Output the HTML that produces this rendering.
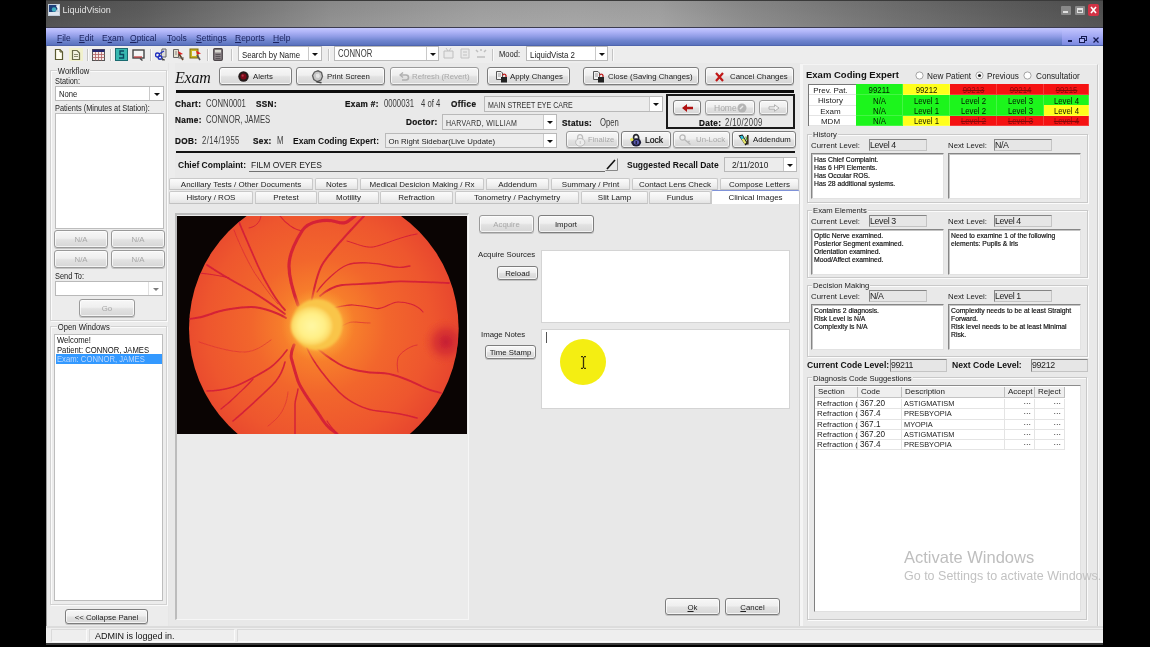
<!DOCTYPE html>
<html>
<head>
<meta charset="utf-8">
<title>LiquidVision</title>
<style>
*{box-sizing:border-box;margin:0;padding:0}
html,body{width:1150px;height:647px;overflow:hidden;background:#000}
body{font-family:"Liberation Sans",sans-serif;font-size:8px;color:#1a1a1a;position:relative}
.a{position:absolute}
#win{position:absolute;left:46px;top:0;width:1057px;height:645px;background:#e9e9e9;overflow:hidden;filter:blur(.45px)}
/* title bar */
#title{position:absolute;left:0;top:0;width:1057px;height:28px;
 background:linear-gradient(180deg,rgba(0,0,0,.05),rgba(255,255,255,.03)),linear-gradient(90deg,#4e4e4e 0,#5c5c5c 9%,#6a6a6a 14%,#909090 27%,#a2a2a2 41%,#a5a5a5 50%,#a2a2a2 58%,#8c8c8c 66%,#707070 80%,#5a5a5a 93%,#505050 100%);
 border-top:1px solid #3a3a3a;border-bottom:1px solid #3c3c50}
#title .t{position:absolute;left:16.5px;top:4px;font-size:9px;color:#e4e4e4;letter-spacing:0}
#menu{position:absolute;left:0;top:28px;width:1057px;height:18px;
 background:linear-gradient(180deg,#c4c8ff 0,#b0b5f8 22%,#909ce6 50%,#6e84ce 75%,#5a72be 100%);border-bottom:1px solid #4e64ac}
#menu span{position:absolute;top:5px;font-size:8.5px;color:#1c2460;white-space:nowrap}
#menu u{text-decoration:underline}
#tb{position:absolute;left:0;top:46px;width:1057px;height:17px;background:#ededed}
.sep{position:absolute;top:49px;width:1px;height:12px;background:#c4c4c4;border-right:1px solid #fafafa;width:2px}
/* generic */
.btn{position:absolute;border:1px solid #7d7d7d;border-radius:3px;
 background:linear-gradient(180deg,#f7f7f7 0,#efefef 45%,#e2e2e2 55%,#d6d6d6 100%);
 box-shadow:inset 0 0 0 1px rgba(255,255,255,.7), 0 1px 0 rgba(120,120,120,.35);
 font-size:7.8px;color:#222;text-align:center;white-space:nowrap;overflow:hidden;padding-top:1px}
.btn.dis{color:#a8a8a8;border-color:#9a9a9a}
.btn span.l{position:absolute;white-space:nowrap}
.combo{position:absolute;background:#fff;border:1px solid #b9b9b9;font-size:8px;white-space:nowrap;overflow:hidden}
.combo.g{background:#ececec}
.combo .ar{position:absolute;right:0;top:0;bottom:0;width:12px;background:#fff;border-left:1px solid #c9c9c9}
.combo .ar:after{content:"";position:absolute;left:50%;top:50%;margin:-1px 0 0 -3px;border:3px solid transparent;border-top:3px solid #111;border-bottom:0}
.combo .v{position:absolute;left:3px;top:50%;transform:translateY(-50%)}
.lb{position:absolute;font-weight:bold;font-size:8.5px;color:#111;white-space:nowrap;line-height:10px}
.tx{position:absolute;font-size:7.8px;color:#222;white-space:nowrap;line-height:10px}
.cond{position:absolute;font-size:10px;color:#3a3a3a;white-space:nowrap;line-height:10px;transform:scaleX(.77);transform-origin:0 50%;margin-top:-.5px}
.cond2{position:absolute;font-size:8.8px;color:#333;white-space:nowrap;line-height:10px;transform:scaleX(.8);transform-origin:0 50%}
.vb{letter-spacing:.35px;font-size:8.2px;-webkit-text-stroke:.2px #111;margin-top:1px}
.grp{position:absolute;border:1px solid #c9c9c9;box-shadow:inset 1px 1px 0 #fbfbfb, 1px 1px 0 #fbfbfb}
.grp>.gl{position:absolute;top:-5px;left:6px;background:#e9e9e9;padding:0 1px;font-size:8px;line-height:10px;color:#222;white-space:nowrap}
.list{position:absolute;background:#fff;border:1px solid #bdbdbd}
.sunk{position:absolute;background:#fff;border:1px solid #e2e2e2;border-top:1px solid #868686;border-left:1px solid #868686;box-shadow:inset 1px 1px 0 #c4c4c4;-webkit-text-stroke:.18px #111;font-size:6.8px;line-height:8.1px;color:#111;padding:2px 0 0 2px;white-space:nowrap;overflow:hidden}
.fld{position:absolute;background:#e6e6e6;border:1px solid #c4c4c4;border-top:1px solid #858585;border-left:1px solid #858585;font-size:8.8px;letter-spacing:-.35px;line-height:10px;color:#222;padding-left:0;white-space:nowrap;overflow:hidden}
.tab{position:absolute;height:12px;border:1px solid #c9c9c9;border-bottom:1px solid #c2c2c2;border-radius:2px 2px 0 0;
 background:linear-gradient(180deg,#fbfbfb 0,#f0f0f0 60%,#e3e3e3 100%);font-size:8px;line-height:11.5px;text-align:center;color:#222;white-space:nowrap;overflow:hidden}
.tab.on{background:#fff;border-top:1px solid #7f92d8;border-bottom:none}
</style>
</head>
<body>
<div id="win">
 <!-- TITLE -->
 <div id="title">
  <svg class="a" style="left:2px;top:3px" width="12" height="12" viewBox="0 0 12 12"><rect width="12" height="12" fill="#c4cfdc"/><path d="M1 1 H8 L10 4 L7 8 H1 Z" fill="#1e3f7a"/><circle cx="6" cy="5.5" r="2.2" fill="#3fb0c0"/><path d="M1 8 H11 V11 H1 Z" fill="#dfe6ee"/><path d="M8 2 L11 1 V7 Z" fill="#eef2f6"/></svg>
  <span class="t">LiquidVision</span>
  <div class="a" style="left:1015px;top:5px;width:10px;height:9px;background:#888;border-radius:1px"><div class="a" style="left:2px;top:5px;width:5px;height:2px;background:#e0e0e0"></div></div>
  <div class="a" style="left:1029px;top:5px;width:10px;height:9px;background:#8a8a8a;border-radius:1px"><div class="a" style="left:2px;top:2px;width:6px;height:5px;border:1px solid #e2e2e2;border-top-width:2px"></div></div>
  <div class="a" style="left:1042px;top:3px;width:11px;height:12px;background:#d23245;border-radius:2px"><svg class="a" style="left:2px;top:2px" width="7" height="8" viewBox="0 0 7 8"><path d="M1 1 L6 7 M6 1 L1 7" stroke="#fff" stroke-width="1.6"/></svg></div>
 </div>
 <!-- MENU -->
 <div id="menu">
  <span style="left:11px"><u>F</u>ile</span>
  <span style="left:33px"><u>E</u>dit</span>
  <span style="left:56px">E<u>x</u>am</span>
  <span style="left:84px"><u>O</u>ptical</span>
  <span style="left:121px"><u>T</u>ools</span>
  <span style="left:150px"><u>S</u>ettings</span>
  <span style="left:189px"><u>R</u>eports</span>
  <span style="left:227px"><u>H</u>elp</span>
  <div class="a" style="left:1016px;top:0;width:41px;height:17px;background:linear-gradient(180deg,#c4c6ff,#9aa2f0 60%,#7a88e0)"></div>
  <div class="a" style="left:1022px;top:12px;width:4px;height:2px;background:#141a50"></div>
  <svg class="a" style="left:1033px;top:8px" width="8" height="7" viewBox="0 0 8 7"><rect x="2.5" y=".5" width="5" height="4" fill="none" stroke="#141a50"/><rect x=".5" y="2.5" width="5" height="4" fill="#aab0f4" stroke="#141a50"/></svg>
  <svg class="a" style="left:1047px;top:9px" width="6" height="6" viewBox="0 0 6 6"><path d="M.5 .5 L5.5 5.5 M5.5 .5 L.5 5.5" stroke="#141a50" stroke-width="1.3"/></svg>
 </div>
 <!-- TOOLBAR -->
 <div id="tb"></div>
 <!-- toolbar icons (coords relative to #win: x-46) -->
 <svg class="a" style="left:8px;top:48px" width="10" height="13" viewBox="0 0 10 13"><path d="M1.5 1.5 H6 L8.5 4 V11.5 H1.5 Z" fill="#fffef0" stroke="#5a5a30" stroke-width="1.2"/><path d="M6 1.5 V4 H8.5" fill="none" stroke="#5a5a30"/></svg>
 <div class="a" style="left:6px;top:48px;width:14px;height:13px;background:#f3f3c8;display:none"></div>
 <div class="a" style="left:23px;top:48px;width:14px;height:13px;background:#f1f1cc"></div>
 <svg class="a" style="left:25px;top:49px" width="10" height="12" viewBox="0 0 10 12"><path d="M1.5 1.5 H6 L8.5 4 V10.5 H1.5 Z" fill="#f4f2e0" stroke="#6a6a48" stroke-width="1.2"/><path d="M3 5.5 H7 M3 7.5 H7" stroke="#8a8a70"/></svg>
 <div class="sep" style="left:41px"></div>
 <svg class="a" style="left:46px;top:49px" width="13" height="12" viewBox="0 0 13 12"><rect x=".5" y=".5" width="12" height="11" fill="#f4e8e8" stroke="#555"/><rect x=".5" y=".5" width="12" height="2.5" fill="#24246e"/><path d="M.5 5.5 H12.5 M.5 8.5 H12.5 M3.5 3 V11.5 M6.5 3 V11.5 M9.5 3 V11.5" stroke="#b06060" stroke-width=".8"/></svg>
 <div class="sep" style="left:64px"></div>
 <svg class="a" style="left:69px;top:48px" width="13" height="13" viewBox="0 0 13 13"><rect x=".5" y=".5" width="12" height="12" fill="#38b8b0" stroke="#1a6a70"/><path d="M9 3 H5 V6.5 H8.5 V10 H4" fill="none" stroke="#0c4a60" stroke-width="1.4"/></svg>
 <svg class="a" style="left:86px;top:49px" width="13" height="12" viewBox="0 0 13 12"><rect x="1" y="1" width="11" height="8" fill="#f4f4f4" stroke="#444" stroke-width="1.4"/><path d="M2 8 H10" stroke="#c03030" stroke-width="1.2"/><path d="M8 9.5 L10.5 11.5" stroke="#444" stroke-width="1.4"/></svg>
 <div class="sep" style="left:104px"></div>
 <svg class="a" style="left:109px;top:48px" width="13" height="13" viewBox="0 0 13 13"><path d="M7 1 H11 V9 H6 Z" fill="#ddd" stroke="#666"/><circle cx="2.5" cy="7" r="2" fill="none" stroke="#2030c0" stroke-width="1.4"/><circle cx="5" cy="9.5" r="1.8" fill="none" stroke="#2030c0" stroke-width="1.4"/><path d="M4 6 L9 3" stroke="#2030c0" stroke-width="1.3"/><path d="M7 10 V12 H10" stroke="#666"/></svg>
 <svg class="a" style="left:126px;top:48px" width="13" height="13" viewBox="0 0 13 13"><path d="M1.5 1.5 H6.5 V9.5 H1.5 Z" fill="#e4e0d0" stroke="#666"/><path d="M3 4 H5 M3 6 H5" stroke="#888"/><path d="M6 3 L11 6 L7 7 Z" fill="#e02020"/><path d="M7 6 L11 12" stroke="#604020" stroke-width="1.6"/><path d="M6.5 10 H12" stroke="#666"/></svg>
 <svg class="a" style="left:143px;top:48px" width="13" height="13" viewBox="0 0 13 13"><rect x="1" y="1" width="8" height="9" fill="#c8b820" stroke="#7a6a10"/><rect x="3" y="3" width="4.5" height="5" fill="#f0f0e0"/><path d="M7 2.5 L12 5.5 L8 6.5 Z" fill="#e02020"/><path d="M8 7 L11 12" stroke="#555" stroke-width="1.6"/></svg>
 <div class="sep" style="left:161px"></div>
 <svg class="a" style="left:167px;top:48px" width="10" height="13" viewBox="0 0 10 13"><rect x=".7" y=".7" width="8.6" height="11.6" rx="1" fill="#8c8488" stroke="#4a4448" stroke-width="1.2"/><rect x="2" y="2" width="6" height="2.5" fill="#d8d8d0"/><path d="M2.5 6.5 H7.5 M2.5 8.5 H7.5 M2.5 10.5 H7.5" stroke="#5a5458" stroke-width="1"/></svg>
 <div class="sep" style="left:185px"></div>
 <div class="combo" style="left:192px;top:46px;width:84px;height:15px"><span class="v" style="font-size:9.5px;transform:translateY(-50%) scaleX(.82);transform-origin:0 50%">Search by Name</span><div class="ar" style="width:13px"></div></div>
 <div class="sep" style="left:282px"></div>
 <div class="combo" style="left:288px;top:46px;width:105px;height:15px"><span class="cond" style="left:3px;top:2px">CONNOR</span><div class="ar" style="width:12px"></div></div>
 <svg class="a" style="left:396px;top:47px" width="46" height="13" viewBox="0 0 46 13" opacity=".55"><path d="M2 4 H11 V11 H2 Z M4 1 L6 4 M9 1 L7 4" fill="#e8e8e8" stroke="#9a9a9a"/><path d="M19 2 H27 V11 H19 Z M21 5 H25 M21 8 H25" fill="#e8e8e8" stroke="#a0a0a0"/><path d="M34 3 L36 5 M44 3 L42 5 M35 10 H43 M39 2 V4" stroke="#9a9a9a" stroke-width="1.5"/></svg>
 <div class="sep" style="left:446px"></div>
 <span class="tx" style="left:453px;top:49px;font-size:9.5px;transform:scaleX(.8);transform-origin:0 50%">Mood:</span>
 <div class="combo" style="left:480px;top:46px;width:82px;height:15px"><span class="v" style="font-size:9.5px;transform:translateY(-50%) scaleX(.83);transform-origin:0 50%">LiquidVista 2</span><div class="ar" style="width:12px"></div></div>
 <div class="sep" style="left:566px"></div>
 <!--TOOLBAR-ITEMS-->
 <!-- LEFT PANEL (x offsets = abs-46) -->
 <div class="a" style="left:0;top:63px;width:122px;height:565px;background:#ececec"></div>
 <div class="a" style="left:122px;top:63px;width:1px;height:565px;background:#e6e6e6"></div>
 <div class="a" style="left:123px;top:63px;width:6px;height:565px;background:#ececec"></div>
 <div class="grp" style="left:4px;top:70px;width:117px;height:251px;border-color:#d2d2d2"><span class="gl" style="background:#ececec;font-size:9px;transform:scaleX(.85);transform-origin:0 50%">Workflow</span></div>
 <span class="tx" style="left:9px;top:76px;font-size:9px;transform:scaleX(.82);transform-origin:0 50%">Station:</span>
 <div class="combo" style="left:9px;top:86px;width:109px;height:15px"><span class="v" style="font-size:9px;transform:translateY(-50%) scaleX(.85);transform-origin:0 50%">None</span><div class="ar" style="width:14px"></div></div>
 <span class="tx" style="left:9px;top:103px;font-size:9px;transform:scaleX(.82);transform-origin:0 50%">Patients (Minutes at Station):</span>
 <div class="list" style="left:9px;top:113px;width:109px;height:116px"></div>
 <div class="btn dis" style="left:8px;top:230px;width:54px;height:18px;line-height:16px">N/A</div>
 <div class="btn dis" style="left:65px;top:230px;width:54px;height:18px;line-height:16px">N/A</div>
 <div class="btn dis" style="left:8px;top:250px;width:54px;height:18px;line-height:16px">N/A</div>
 <div class="btn dis" style="left:65px;top:250px;width:54px;height:18px;line-height:16px">N/A</div>
 <span class="tx" style="left:9px;top:271px;font-size:9px;transform:scaleX(.82);transform-origin:0 50%">Send To:</span>
 <div class="combo" style="left:9px;top:281px;width:108px;height:15px"><div class="ar" style="width:14px;opacity:.55"></div></div>
 <div class="btn dis" style="left:33px;top:299px;width:56px;height:18px;line-height:16px">Go</div>
 <div class="grp" style="left:4px;top:326px;width:117px;height:279px;border-color:#d2d2d2"><span class="gl" style="background:#ececec;font-size:9px;transform:scaleX(.85);transform-origin:0 50%">Open Windows</span></div>
 <div class="list" style="left:8px;top:334px;width:109px;height:267px">
  <div class="a" style="left:2px;top:1px;font-size:9.2px;line-height:9.5px;color:#111;white-space:nowrap;transform:scaleX(.835);transform-origin:0 50%">Welcome!<br>Patient: CONNOR, JAMES</div>
  <div class="a" style="left:1px;top:19px;width:106px;height:10px;background:#3399ff;color:#bcd8ff;font-size:9.2px;line-height:10px;padding-left:1px;white-space:nowrap"><span style="display:inline-block;transform:scaleX(.835);transform-origin:0 50%">Exam: CONNOR, JAMES</span></div>
 </div>
 <div class="btn" style="left:19px;top:609px;width:83px;height:15px;line-height:13px">&lt;&lt; Collapse Panel</div>
 <!--LEFT-PANEL-->
 <!-- MAIN PANEL (x offsets = abs-46) -->
 <div class="a" style="left:129px;top:63px;width:627px;height:563px;background:#e9e9e9"></div>
 
 <span class="a" style="left:129px;top:68px;font-family:'Liberation Serif',serif;font-style:italic;font-size:16px;line-height:20px;color:#111;letter-spacing:-.2px">Exam</span>
 <!-- top buttons -->
 <div class="btn" style="left:173px;top:67px;width:73px;height:18px"><svg class="a" style="left:18px;top:3px" width="11" height="11" viewBox="0 0 11 11"><circle cx="5.5" cy="5.5" r="5.2" fill="#241a1a"/><circle cx="5.5" cy="5.5" r="3" fill="#7c0818"/><circle cx="4.7" cy="4.7" r="1.1" fill="#b03a48"/></svg><span class="l" style="left:33px;top:4px">Alerts</span></div>
 <div class="btn" style="left:250px;top:67px;width:89px;height:18px"><svg class="a" style="left:14px;top:2px" width="13" height="14" viewBox="0 0 13 14"><path d="M3.5 2 L7 .8 L10.5 2.5 L11.5 6.5 L10 10 L6 11.5 L2.8 9.5 L1.5 5.5 Z" fill="#c6c6c6" stroke="#5e5e5e" stroke-width="1.3"/><path d="M4.8 4.2 L7.8 3.6 L9 6 L7.8 8 L5.2 7.6 Z" fill="#e4e4e4"/><path d="M5.5 11.8 L10.5 12.8" stroke="#444" stroke-width="1.6"/></svg><span class="l" style="left:30px;top:4px">Print Screen</span></div>
 <div class="btn dis" style="left:344px;top:67px;width:89px;height:18px"><svg class="a" style="left:8px;top:4px" width="11" height="10" viewBox="0 0 11 10"><path d="M2 3 H7 A2.5 2.5 0 0 1 7 8 H3" fill="none" stroke="#b0b0b0" stroke-width="1.6"/><path d="M4 .5 L1 3 L4 5.5" fill="none" stroke="#b0b0b0" stroke-width="1.4"/></svg><span class="l" style="left:21px;top:4px">Refresh (Revert)</span></div>
 <div class="btn" style="left:441px;top:67px;width:83px;height:18px"><svg class="a" style="left:7px;top:2px" width="13" height="13" viewBox="0 0 13 13"><path d="M1.5 1.5 H6 L7.5 3 V9.5 H1.5 Z" fill="#f0f0f0" stroke="#555"/><path d="M3 4 H6 M3 6 H6" stroke="#888" stroke-width=".8"/><rect x="6" y="7" width="6" height="5.5" fill="#222"/><path d="M7.5 5.5 A1.8 1.8 0 0 1 11 5.5 V7" fill="none" stroke="#c02020" stroke-width="1.3"/></svg><span class="l" style="left:22px;top:4px">Apply Changes</span></div>
 <div class="btn" style="left:537px;top:67px;width:116px;height:18px"><svg class="a" style="left:8px;top:2px" width="13" height="13" viewBox="0 0 13 13"><path d="M1.5 1.5 H6 L7.5 3 V9.5 H1.5 Z" fill="#f0f0f0" stroke="#555"/><path d="M3 4 H6 M3 6 H6" stroke="#888" stroke-width=".8"/><rect x="6" y="7" width="6" height="5.5" fill="#222"/><path d="M7.5 5.5 A1.8 1.8 0 0 1 11 5.5 V7" fill="none" stroke="#c02020" stroke-width="1.3"/></svg><span class="l" style="left:24px;top:4px">Close (Saving Changes)</span></div>
 <div class="btn" style="left:659px;top:67px;width:89px;height:18px"><svg class="a" style="left:9px;top:4px" width="9" height="10" viewBox="0 0 9 10"><path d="M1 1 L8 9 M8 1 L1 9" stroke="#c01818" stroke-width="2.2"/></svg><span class="l" style="left:24px;top:4px">Cancel Changes</span></div>
 <!-- thick rule -->
 <div class="a" style="left:130px;top:90px;width:618px;height:3px;background:#0c0c0c"></div>
 <!-- patient info row 1 -->
 <span class="lb vb" style="left:129px;top:99px">Chart:</span><span class="cond" style="left:160px;top:99px">CONN0001</span>
 <span class="lb vb" style="left:210px;top:99px">SSN:</span>
 <span class="lb vb" style="left:299px;top:99px">Exam #:</span><span class="cond" style="left:338px;top:99px">0000031</span><span class="cond" style="left:375px;top:99px">4 of 4</span>
 <span class="lb vb" style="left:405px;top:99px">Office</span>
 <div class="combo g" style="left:438px;top:96px;width:179px;height:16px"><span class="cond2" style="left:3px;top:3px">MAIN STREET EYE CARE</span><div class="ar" style="width:13px"></div></div>
 <!-- row 2 -->
 <span class="lb vb" style="left:129px;top:115px">Name:</span><span class="cond" style="left:160px;top:115px">CONNOR, JAMES</span>
 <span class="lb vb" style="left:360px;top:117px">Doctor:</span>
 <div class="combo g" style="left:396px;top:114px;width:115px;height:16px"><span class="cond2" style="left:3px;top:3px;letter-spacing:.35px">HARVARD, WILLIAM</span><div class="ar" style="width:13px"></div></div>
 <span class="lb vb" style="left:516px;top:118px">Status:</span><span class="cond" style="left:554px;top:118px">Open</span>
 <!-- row 3 -->
 <span class="lb vb" style="left:129px;top:136px">DOB:</span><span class="cond" style="left:156px;top:136px;letter-spacing:.5px">2/14/1955</span>
 <span class="lb vb" style="left:207px;top:136px">Sex:</span><span class="cond" style="left:231px;top:136px">M</span>
 <span class="lb" style="left:247px;top:136px">Exam Coding Expert:</span>
 <div class="combo g" style="left:339px;top:133px;width:172px;height:15px"><span class="v" style="font-size:7.8px;left:2.5px">On Right Sidebar(Live Update)</span><div class="ar" style="width:13px"></div></div>
 <!-- nav box -->
 <div class="a" style="left:620px;top:94px;width:129px;height:35px;border:2px solid #1a1a1a"></div>
 <div class="btn" style="left:627px;top:100px;width:28px;height:15px"><svg class="a" style="left:8px;top:3px" width="11" height="8" viewBox="0 0 11 8"><path d="M0 4 L5 0 V2.7 H11 V5.3 H5 V8 Z" fill="#b01010"/></svg></div>
 <div class="btn dis" style="left:659px;top:100px;width:50px;height:15px"><span class="l" style="left:8px;top:2px;font-size:8.5px">Home</span><svg class="a" style="left:31px;top:2px" width="10" height="10" viewBox="0 0 10 10"><circle cx="5" cy="5" r="4.5" fill="#b4b4b4"/><path d="M3 6 L6 3" stroke="#e8e8e8" stroke-width="1.5"/></svg></div>
 <div class="btn dis" style="left:713px;top:100px;width:29px;height:15px"><svg class="a" style="left:8px;top:3px" width="12" height="8" viewBox="0 0 12 8"><path d="M11 4 L6.5 .7 V2.8 H1 V5.2 H6.5 V7.3 Z" fill="#f2f2f2" stroke="#aaa" stroke-width=".9"/></svg></div>
 <span class="lb vb" style="left:653px;top:118px">Date:</span><span class="cond" style="left:679px;top:118px;letter-spacing:.5px">2/10/2009</span>
 <!-- finalize row -->
 <div class="btn dis" style="left:520px;top:131px;width:53px;height:17px"><svg class="a" style="left:7px;top:1px" width="12" height="14" viewBox="0 0 12 14"><path d="M3.6 7 V4.6 A2.5 2.9 0 0 1 8.6 4.6 V7" stroke="#bdbdbd" stroke-width="1.3" fill="none"/><ellipse cx="6.2" cy="9.3" rx="4.6" ry="3.9" fill="#ececec" stroke="#bdbdbd"/><path d="M6.2 8 V11" stroke="#c4c4c4" stroke-width="1"/></svg><span class="l" style="left:21px;top:3px;font-size:7.6px">Finalize</span></div>
 <div class="btn" style="left:575px;top:131px;width:50px;height:17px"><svg class="a" style="left:8px;top:1px" width="12" height="14" viewBox="0 0 12 14"><path d="M3.6 7 V4.6 A2.5 2.9 0 0 1 8.6 4.6 V7" stroke="#26262e" stroke-width="1.7" fill="none"/><ellipse cx="6.2" cy="9.3" rx="4.9" ry="4.1" fill="#1c1c36"/><ellipse cx="6.4" cy="9.3" rx="2.7" ry="2.3" fill="#5a5ab0"/><path d="M6.2 8 V11" stroke="#101020" stroke-width="1.1"/><circle cx="1.8" cy="6.6" r="1.7" fill="#e6e65a"/></svg><span class="l" style="left:23px;top:3px;font-size:8.6px;color:#111;-webkit-text-stroke:.2px #111">Lock</span></div>
 <div class="btn dis" style="left:627px;top:131px;width:57px;height:17px"><svg class="a" style="left:5px;top:2px" width="13" height="12" viewBox="0 0 13 12"><circle cx="3.5" cy="3.5" r="2.6" fill="none" stroke="#b8b8b8" stroke-width="1.3"/><path d="M5.5 5.5 L11.5 10.5 M9 8.5 L10.5 7" stroke="#b8b8b8" stroke-width="1.4"/></svg><span class="l" style="left:22px;top:3px;font-size:7.8px">Un-Lock</span></div>
 <div class="btn" style="left:686px;top:131px;width:64px;height:17px"><svg class="a" style="left:5px;top:2px" width="12" height="12" viewBox="0 0 12 12"><path d="M.5 1.5 L4.5 .5 L10 9.5 L7.5 11.5 Z" fill="#1a1a16"/><path d="M2 2.2 L4.3 1.6 L6 4.4 L3.6 5.2 Z" fill="#2cc0dc"/><path d="M3.6 5.2 L6 4.4 L8.4 8.8 L6.6 10 Z" fill="#e8e86a"/><path d="M9.8 1 V10.5" stroke="#3a2c1c" stroke-width="1.6"/><path d="M7.8 2.5 L9 6" stroke="#58a030" stroke-width="1.2"/></svg><span class="l" style="left:20px;top:3px;font-size:7.8px;color:#111">Addendum</span></div>
 <!-- thin rule -->
 <div class="a" style="left:130px;top:150.6px;width:619px;height:2px;background:#141414"></div>
 <!-- chief complaint -->
 <span class="lb" style="left:132px;top:160px">Chief Complaint:</span>
 <span class="tx" style="left:205px;top:159.6px;font-size:8.5px;color:#1a1a1a">FILM OVER EYES</span>
 <div class="a" style="left:203px;top:170.5px;width:356px;height:1px;background:#707070"></div>
 <svg class="a" style="left:559px;top:158px" width="13" height="13" viewBox="0 0 13 13"><path d="M12.5 .5 V12.5 H.5" fill="none" stroke="#888"/><path d="M2 11 L10 2" stroke="#111" stroke-width="1.6"/></svg>
 <span class="lb" style="left:581px;top:159.6px">Suggested Recall Date</span>
 <div class="combo g" style="left:678px;top:157px;width:73px;height:15px"><span class="v" style="left:7px;font-size:8.3px">2/11/2010</span><div class="ar" style="width:13px"></div></div>
 <!-- TABS row 1 (y 178-190) -->
 <div class="tab" style="left:123px;top:178px;width:144px">Ancillary Tests / Other Documents</div>
 <div class="tab" style="left:269px;top:178px;width:43px">Notes</div>
 <div class="tab" style="left:314px;top:178px;width:124px">Medical Desicion Making / Rx</div>
 <div class="tab" style="left:440px;top:178px;width:63px">Addendum</div>
 <div class="tab" style="left:505px;top:178px;width:79px">Summary / Print</div>
 <div class="tab" style="left:586px;top:178px;width:86px">Contact Lens Check</div>
 <div class="tab" style="left:674px;top:178px;width:79px">Compose Letters</div>
 <!-- TABS row 2 (y 191-203) -->
 <div class="tab" style="left:123px;top:191px;width:84px;height:13px">History / ROS</div>
 <div class="tab" style="left:209px;top:191px;width:62px;height:13px">Pretest</div>
 <div class="tab" style="left:272px;top:191px;width:61px;height:13px">Motility</div>
 <div class="tab" style="left:334px;top:191px;width:73px;height:13px">Refraction</div>
 <div class="tab" style="left:409px;top:191px;width:124px;height:13px">Tonometry / Pachymetry</div>
 <div class="tab" style="left:535px;top:191px;width:67px;height:13px">Slit Lamp</div>
 <div class="tab" style="left:603px;top:191px;width:62px;height:13px">Fundus</div>
 <div class="tab on" style="left:665px;top:190px;width:89px;height:14px;line-height:13px">Clinical Images</div>
 <!-- tab content -->
 <div class="a" style="left:123px;top:204px;width:631px;height:422px;background:#e8e8e8;border-right:1px solid #d0d0d0"></div>
 <div class="a" style="left:754px;top:204px;width:2px;height:422px;background:#f7f7f7"></div>
 <!-- image frame -->
 <div class="a" style="left:129px;top:213px;width:294px;height:407px;border:1px solid #f6f6f6;border-top:2px solid #bcbcbc;border-left:2px solid #bcbcbc;background:#ebebeb"></div>
 <svg class="a" style="left:131px;top:216px" width="290" height="218" viewBox="0 0 290 218">
  <defs>
   <radialGradient id="fg" cx="142" cy="110" r="150" gradientUnits="userSpaceOnUse">
    <stop offset="0" stop-color="#fa962c"/><stop offset=".22" stop-color="#f7802b"/><stop offset=".45" stop-color="#f2662c"/><stop offset=".75" stop-color="#ee562e"/><stop offset=".92" stop-color="#e8482e"/><stop offset="1" stop-color="#e0402c"/>
   </radialGradient>
   <radialGradient id="od" cx=".5" cy=".5" r=".5">
    <stop offset="0" stop-color="#fbb040" stop-opacity=".9"/><stop offset=".66" stop-color="#fba83a" stop-opacity=".75"/><stop offset="1" stop-color="#f8902e" stop-opacity="0"/>
   </radialGradient>
   <radialGradient id="oc" cx=".5" cy=".5" r=".5">
    <stop offset="0" stop-color="#fff7a4"/><stop offset=".6" stop-color="#fff088"/><stop offset=".85" stop-color="#fde070"/><stop offset="1" stop-color="#fbcf58"/>
   </radialGradient>
   <filter id="bl2" x="-10%" y="-10%" width="120%" height="120%"><feGaussianBlur stdDeviation=".9"/></filter>
   <radialGradient id="mc" cx=".5" cy=".5" r=".5">
    <stop offset="0" stop-color="#c41a34" stop-opacity=".95"/><stop offset=".45" stop-color="#d22a32" stop-opacity=".7"/><stop offset="1" stop-color="#e8482e" stop-opacity="0"/>
   </radialGradient>
   <clipPath id="cc"><ellipse cx="146.8" cy="112.4" rx="134.8" ry="137.1"/></clipPath>
   <filter id="bl" x="-5%" y="-5%" width="110%" height="110%"><feGaussianBlur stdDeviation=".45"/></filter>
  </defs>
  <rect width="290" height="218" fill="#0a0403"/>
  <ellipse cx="146.8" cy="112.4" rx="134.8" ry="137.1" fill="url(#fg)"/>
  <g clip-path="url(#cc)" fill="none" stroke="#d21c38" stroke-opacity=".92" stroke-linecap="round" stroke-linejoin="round" filter="url(#bl)">
   <circle cx="269" cy="126" r="24" fill="url(#mc)" stroke="none"/>
   <!-- A main superior -->
   <path d="M121 89 C117 78 112 62 112 50 S118 26 125 15 S150 3 160 6 S172 4 178 0" stroke-width="3.2"/>
   <!-- G branch of A -->
   <path d="M125 15 C118 14 109 8 103 0" stroke-width="1.1"/>
   <path d="M84 0 C83 7 78 11 72 12" stroke-width=".9"/>
   <!-- B, C -->
   <path d="M108 94 C100 86 88 66 81 50 S66 16 62 6" stroke-width="1.8"/>
   <path d="M101 88 C92 78 84 66 79 59 S62 28 57 14" stroke-width="1" stroke-opacity=".55"/>
   <!-- D, E -->
   <path d="M108 98 C100 92 80 78 67 71 S42 57 30 49" stroke-width="1.8"/>
   <path d="M52 62 C45 60 32 58 22 57" stroke-width="1.1"/>
   <!-- F -->
   <path d="M109 102 C103 98 86 91 74 91 S44 94 34 98 S20 102 12 103" stroke-width="1.9"/>
   <!-- I sup right -->
   <path d="M134 88 C137 72 140 58 145 49 S170 18 187 0" stroke-width="2"/>
   <!-- K -->
   <path d="M170 25 C180 28 188 32 196 31 S225 20 240 18" stroke-width="1"/>
   <!-- L -->
   <path d="M140 76 C145 68 160 53 170 49 S200 47 212 50 S226 51 233 50" stroke-width="1.3"/>
   <!-- M -->
   <path d="M143 80 C150 74 158 70 165 69 S200 68 212 66 S255 67 272 67" stroke-width="1.8"/>
   <!-- N -->
   <path d="M139 89 C146 91 152 92 156 91.8 S170 88.5 176 89 S192 91 199 92.5 S214 86 221 86 S240 88 246 96" stroke-width="1.2"/>
   <path d="M165 110 C169 108 172 106 176 106 S188 107 193 107" stroke-width=".9" stroke-opacity=".6"/>
   <!-- O, P -->
   <path d="M110 134 C104 142 98 148 94 151 S66 168 56 171 S40 175 30 175" stroke-width="1.6"/>
   <path d="M76 163 C70 170 64 175 59 180 S48 190 44 193" stroke-width="1.3"/>
   <!-- Q -->
   <path d="M108 146 C106 154 103 160 99 165 S66 197 56 205" stroke-width="1.6"/>
   <!-- R main inferior -->
   <path d="M117 129 C115 134 113 138 114.5 143 S118 156 121 165 S138 192 145 203 S156 214 160 218" stroke-width="3"/>
   <!-- S -->
   <path d="M121 173 C120 180 118 184 118 188 S118 210 118 218" stroke-width="1.5"/>
   <!-- T, U faint -->
   <path d="M22 126 C40 132 55 136 67 136 S88 128 94 124" stroke-width=".9" stroke-opacity=".5"/>
   <path d="M111 176 C110 186 107 192 104 197 S96 206 91 210" stroke-width=".9" stroke-opacity=".5"/>
   <!-- V -->
   <path d="M138 130 C142 134 152 142 162 148 S190 157 204 157 S236 166 246 171 S258 175 264 177" stroke-width="1.8"/>
   <!-- W -->
   <path d="M130 132 C136 146 150 164 162 176 S190 194 201 195 S230 199 240 202" stroke-width="1.6"/>
   <!-- X -->
   <path d="M221 156 C220 150 220 146 221 142 S232 130 240 129" stroke-width=".9" stroke-opacity=".7"/>
   <path d="M150 205 C153 210 157 214 160 218" stroke-width="1.2"/>
  </g>
  <circle cx="141" cy="109" r="37" fill="url(#od)"/>
  <g filter="url(#bl2)"><circle cx="140" cy="108.5" r="25.5" fill="#f9c548"/>
  <ellipse cx="134.7" cy="110" rx="21" ry="19.5" fill="url(#oc)"/></g>
 </svg>
 <!-- acquire/import -->
 <div class="btn dis" style="left:433px;top:215px;width:55px;height:18px;line-height:16px">Acquire</div>
 <div class="btn" style="left:492px;top:215px;width:56px;height:18px;line-height:16px">Import</div>
 <span class="tx" style="left:432px;top:250px">Acquire Sources</span>
 <div class="list" style="left:495px;top:250px;width:249px;height:73px;border-color:#d4d4d4"></div>
 <div class="btn" style="left:451px;top:266px;width:41px;height:14px;line-height:12px">Reload</div>
 <span class="tx" style="left:435px;top:330px">Image Notes</span>
 <div class="list" style="left:495px;top:329px;width:249px;height:80px;border-color:#d4d4d4"></div>
 <div class="btn" style="left:439px;top:345px;width:51px;height:14px;line-height:12px">Time Stamp</div>
 <div class="a" style="left:500px;top:332px;width:1px;height:11px;background:#555"></div>
 <div class="a" style="left:514px;top:339px;width:46px;height:46px;border-radius:50%;background:#f4ee12"></div>
 <svg class="a" style="left:534px;top:356px" width="7" height="13" viewBox="0 0 7 13"><path d="M1 .7 H3 M4 .7 H6 M3.5 1 V12 M1 12.3 H3 M4 12.3 H6" stroke="#3a3208" stroke-width="1.3" fill="none"/></svg>
 <!-- ok/cancel -->
 <div class="btn" style="left:619px;top:598px;width:55px;height:17px;line-height:15px"><u>O</u>k</div>
 <div class="btn" style="left:679px;top:598px;width:55px;height:17px;line-height:15px"><u>C</u>ancel</div>
 <!--MAIN-PANEL-->
 <!-- RIGHT PANEL (x offsets = abs-46) -->
 <div class="a" style="left:754px;top:64px;width:3px;height:563px;background:#f5f5f5"></div><div class="a" style="left:757px;top:63px;width:300px;height:565px;background:#ececec"></div>
 <div class="a" style="left:757px;top:64px;width:295px;height:564px;background:#e9e9e9;border-top:1px solid #f4f4f4;border-right:1px solid #c8c8c8;border-bottom:1px solid #c8c8c8;box-shadow:1px 1px 0 #f8f8f8"></div>
 <span class="a" style="left:760px;top:69px;font-weight:bold;font-size:9.5px;line-height:12px;color:#111;white-space:nowrap">Exam Coding Expert</span>
 <svg class="a" style="left:869px;top:71px" width="9" height="9" viewBox="0 0 9 9"><circle cx="4.5" cy="4.5" r="3.6" fill="#fff" stroke="#9c9c9c" stroke-width=".9"/></svg>
 <span class="tx" style="left:881px;top:71.5px;font-size:8.2px">New Patient</span>
 <svg class="a" style="left:929px;top:71px" width="9" height="9" viewBox="0 0 9 9"><circle cx="4.5" cy="4.5" r="3.6" fill="#fff" stroke="#9c9c9c" stroke-width=".9"/><circle cx="4.5" cy="4.5" r="1.6" fill="#222"/></svg>
 <span class="tx" style="left:941px;top:71.5px;font-size:8.2px">Previous</span>
 <svg class="a" style="left:977px;top:71px" width="9" height="9" viewBox="0 0 9 9"><circle cx="4.5" cy="4.5" r="3.6" fill="#fff" stroke="#9c9c9c" stroke-width=".9"/></svg>
 <span class="tx" style="left:990px;top:71.5px;font-size:8.2px">Consultatior</span>
 <div class="a" style="left:762px;top:84px;width:281px;height:41.5px;background:#fff;border-top:1px solid #777;border-left:1px solid #777"></div>
 <div class="a" style="left:763px;top:84.5px;width:47px;height:10.5px;font-size:8px;line-height:12.0px;text-align:center;color:#222;border-bottom:1px solid #e4e4e4;padding-right:4px">Prev. Pat.</div>
 <div class="a" style="left:810px;top:84px;width:47.3px;height:11.0px;background:#1cf51c;font-size:9px;line-height:12.3px;text-align:center;color:#021c02;box-shadow:inset -1px -1px 0 rgba(255,255,255,.18)"><span style="display:inline-block;transform:scaleX(.87)">99211</span></div>
 <div class="a" style="left:857px;top:84px;width:47.3px;height:11.0px;background:#ffff1c;font-size:9px;line-height:12.3px;text-align:center;color:#1c1c00;box-shadow:inset -1px -1px 0 rgba(255,255,255,.18)"><span style="display:inline-block;transform:scaleX(.87)">99212</span></div>
 <div class="a" style="left:904px;top:84px;width:47.3px;height:11.0px;background:#f51212;font-size:9px;line-height:12.3px;text-align:center;color:#8a0808;box-shadow:inset -1px -1px 0 rgba(255,255,255,.18)"><span style="display:inline-block;transform:scaleX(.87);text-decoration:line-through">99213</span></div>
 <div class="a" style="left:951px;top:84px;width:47.3px;height:11.0px;background:#f51212;font-size:9px;line-height:12.3px;text-align:center;color:#8a0808;box-shadow:inset -1px -1px 0 rgba(255,255,255,.18)"><span style="display:inline-block;transform:scaleX(.87);text-decoration:line-through">99214</span></div>
 <div class="a" style="left:998px;top:84px;width:45.3px;height:11.0px;background:#f51212;font-size:9px;line-height:12.3px;text-align:center;color:#8a0808;box-shadow:inset -1px -1px 0 rgba(255,255,255,.18)"><span style="display:inline-block;transform:scaleX(.87);text-decoration:line-through">99215</span></div>
 <div class="a" style="left:763px;top:95.0px;width:47px;height:10.5px;font-size:8px;line-height:12.0px;text-align:center;color:#222;border-bottom:1px solid #e4e4e4;padding-right:4px">History</div>
 <div class="a" style="left:810px;top:94.5px;width:47.3px;height:11.0px;background:#1cf51c;font-size:9px;line-height:12.3px;text-align:center;color:#021c02;box-shadow:inset -1px -1px 0 rgba(255,255,255,.18)"><span style="display:inline-block;transform:scaleX(.87)">N/A</span></div>
 <div class="a" style="left:857px;top:94.5px;width:47.3px;height:11.0px;background:#1cf51c;font-size:9px;line-height:12.3px;text-align:center;color:#021c02;box-shadow:inset -1px -1px 0 rgba(255,255,255,.18)"><span style="display:inline-block;transform:scaleX(.87)">Level 1</span></div>
 <div class="a" style="left:904px;top:94.5px;width:47.3px;height:11.0px;background:#1cf51c;font-size:9px;line-height:12.3px;text-align:center;color:#021c02;box-shadow:inset -1px -1px 0 rgba(255,255,255,.18)"><span style="display:inline-block;transform:scaleX(.87)">Level 2</span></div>
 <div class="a" style="left:951px;top:94.5px;width:47.3px;height:11.0px;background:#1cf51c;font-size:9px;line-height:12.3px;text-align:center;color:#021c02;box-shadow:inset -1px -1px 0 rgba(255,255,255,.18)"><span style="display:inline-block;transform:scaleX(.87)">Level 3</span></div>
 <div class="a" style="left:998px;top:94.5px;width:45.3px;height:11.0px;background:#1cf51c;font-size:9px;line-height:12.3px;text-align:center;color:#021c02;box-shadow:inset -1px -1px 0 rgba(255,255,255,.18)"><span style="display:inline-block;transform:scaleX(.87)">Level 4</span></div>
 <div class="a" style="left:763px;top:105.5px;width:47px;height:10.5px;font-size:8px;line-height:12.0px;text-align:center;color:#222;border-bottom:1px solid #e4e4e4;padding-right:4px">Exam</div>
 <div class="a" style="left:810px;top:105px;width:47.3px;height:11.0px;background:#1cf51c;font-size:9px;line-height:12.3px;text-align:center;color:#021c02;box-shadow:inset -1px -1px 0 rgba(255,255,255,.18)"><span style="display:inline-block;transform:scaleX(.87)">N/A</span></div>
 <div class="a" style="left:857px;top:105px;width:47.3px;height:11.0px;background:#1cf51c;font-size:9px;line-height:12.3px;text-align:center;color:#021c02;box-shadow:inset -1px -1px 0 rgba(255,255,255,.18)"><span style="display:inline-block;transform:scaleX(.87)">Level 1</span></div>
 <div class="a" style="left:904px;top:105px;width:47.3px;height:11.0px;background:#1cf51c;font-size:9px;line-height:12.3px;text-align:center;color:#021c02;box-shadow:inset -1px -1px 0 rgba(255,255,255,.18)"><span style="display:inline-block;transform:scaleX(.87)">Level 2</span></div>
 <div class="a" style="left:951px;top:105px;width:47.3px;height:11.0px;background:#1cf51c;font-size:9px;line-height:12.3px;text-align:center;color:#021c02;box-shadow:inset -1px -1px 0 rgba(255,255,255,.18)"><span style="display:inline-block;transform:scaleX(.87)">Level 3</span></div>
 <div class="a" style="left:998px;top:105px;width:45.3px;height:11.0px;background:#ffff1c;font-size:9px;line-height:12.3px;text-align:center;color:#1c1c00;box-shadow:inset -1px -1px 0 rgba(255,255,255,.18)"><span style="display:inline-block;transform:scaleX(.87)">Level 4</span></div>
 <div class="a" style="left:763px;top:116.0px;width:47px;height:10.0px;font-size:8px;line-height:11.5px;text-align:center;color:#222;border-bottom:1px solid #e4e4e4;padding-right:4px">MDM</div>
 <div class="a" style="left:810px;top:115.5px;width:47.3px;height:10.5px;background:#1cf51c;font-size:9px;line-height:11.8px;text-align:center;color:#021c02;box-shadow:inset -1px -1px 0 rgba(255,255,255,.18)"><span style="display:inline-block;transform:scaleX(.87)">N/A</span></div>
 <div class="a" style="left:857px;top:115.5px;width:47.3px;height:10.5px;background:#ffff1c;font-size:9px;line-height:11.8px;text-align:center;color:#1c1c00;box-shadow:inset -1px -1px 0 rgba(255,255,255,.18)"><span style="display:inline-block;transform:scaleX(.87)">Level 1</span></div>
 <div class="a" style="left:904px;top:115.5px;width:47.3px;height:10.5px;background:#f51212;font-size:9px;line-height:11.8px;text-align:center;color:#8a0808;box-shadow:inset -1px -1px 0 rgba(255,255,255,.18)"><span style="display:inline-block;transform:scaleX(.87);text-decoration:line-through">Level 2</span></div>
 <div class="a" style="left:951px;top:115.5px;width:47.3px;height:10.5px;background:#f51212;font-size:9px;line-height:11.8px;text-align:center;color:#8a0808;box-shadow:inset -1px -1px 0 rgba(255,255,255,.18)"><span style="display:inline-block;transform:scaleX(.87);text-decoration:line-through">Level 3</span></div>
 <div class="a" style="left:998px;top:115.5px;width:45.3px;height:10.5px;background:#f51212;font-size:9px;line-height:11.8px;text-align:center;color:#8a0808;box-shadow:inset -1px -1px 0 rgba(255,255,255,.18)"><span style="display:inline-block;transform:scaleX(.87);text-decoration:line-through">Level 4</span></div>
 <div class="grp" style="left:761px;top:134px;width:281px;height:69px"><span class="gl" style="background:#e9e9e9;left:4px;font-size:7.7px">History</span></div>
 <span class="tx" style="left:765px;top:141px">Current Level:</span>
 <div class="fld" style="left:823px;top:139px;width:58px;height:12px">Level 4</div>
 <span class="tx" style="left:902px;top:141px">Next Level:</span>
 <div class="fld" style="left:948px;top:139px;width:58px;height:12px">N/A</div>
 <div class="sunk" style="left:765px;top:153px;width:133px;height:46px">Has Chief Complaint.<br>Has 6 HPI Elements.<br>Has Occular ROS.<br>Has 28 additional systems.</div>
 <div class="sunk" style="left:902px;top:153px;width:133px;height:46px"></div>
 <div class="grp" style="left:761px;top:210px;width:281px;height:68px"><span class="gl" style="background:#e9e9e9;left:4px;font-size:7.7px">Exam Elements</span></div>
 <span class="tx" style="left:765px;top:217px">Current Level:</span>
 <div class="fld" style="left:823px;top:215px;width:58px;height:12px">Level 3</div>
 <span class="tx" style="left:902px;top:217px">Next Level:</span>
 <div class="fld" style="left:948px;top:215px;width:58px;height:12px">Level 4</div>
 <div class="sunk" style="left:765px;top:229px;width:133px;height:46px">Optic Nerve examined.<br>Posterior Segment examined.<br>Orientation examined.<br>Mood/Affect examined.</div>
 <div class="sunk" style="left:902px;top:229px;width:133px;height:46px">Need to examine 1 of the following<br>elements: Pupils &amp; Iris</div>
 <div class="grp" style="left:761px;top:285px;width:281px;height:72px"><span class="gl" style="background:#e9e9e9;left:4px;font-size:7.7px">Decision Making</span></div>
 <span class="tx" style="left:765px;top:292px">Current Level:</span>
 <div class="fld" style="left:823px;top:290px;width:58px;height:12px">N/A</div>
 <span class="tx" style="left:902px;top:292px">Next Level:</span>
 <div class="fld" style="left:948px;top:290px;width:58px;height:12px">Level 1</div>
 <div class="sunk" style="left:765px;top:304px;width:133px;height:46px">Contains 2 diagnosis.<br>Risk Level is N/A<br>Complexity is N/A</div>
 <div class="sunk" style="left:902px;top:304px;width:133px;height:46px">Complexity needs to be at least Straight<br>Forward.<br>Risk level needs to be at least Minimal<br>Risk.</div>
 <span class="a" style="left:761px;top:360px;font-weight:bold;font-size:8.6px;line-height:11px;color:#111;white-space:nowrap">Current Code Level:</span>
 <div class="fld" style="left:844px;top:359px;width:57px;height:13px">99211</div>
 <span class="a" style="left:906px;top:360px;font-weight:bold;font-size:8.6px;line-height:11px;color:#111;white-space:nowrap">Next Code Level:</span>
 <div class="fld" style="left:985px;top:359px;width:57px;height:13px">99212</div>
 <div class="grp" style="left:761px;top:376.5px;width:280px;height:243.5px"><span class="gl" style="top:-3.5px;background:#e9e9e9;left:4px;font-size:7.7px">Diagnosis Code Suggestions</span></div>
 <div class="a" style="left:768px;top:385px;width:267px;height:227px;background:#fff;border:1px solid #e0e0e0;border-top:1px solid #8c8c8c;border-left:1px solid #808080"></div>
 <div class="a" style="left:769px;top:387px;width:43px;height:11px;background:#efefef;border-right:1px solid #bdbdbd;border-bottom:1px solid #c4c4c4;font-size:8px;line-height:10px;padding-left:3px;color:#222;white-space:nowrap;overflow:hidden">Section</div>
 <div class="a" style="left:812px;top:387px;width:44px;height:11px;background:#efefef;border-right:1px solid #bdbdbd;border-bottom:1px solid #c4c4c4;font-size:8px;line-height:10px;padding-left:3px;color:#222;white-space:nowrap;overflow:hidden">Code</div>
 <div class="a" style="left:856px;top:387px;width:103px;height:11px;background:#efefef;border-right:1px solid #bdbdbd;border-bottom:1px solid #c4c4c4;font-size:8px;line-height:10px;padding-left:3px;color:#222;white-space:nowrap;overflow:hidden">Description</div>
 <div class="a" style="left:959px;top:387px;width:30px;height:11px;background:#efefef;border-right:1px solid #bdbdbd;border-bottom:1px solid #c4c4c4;font-size:8px;line-height:10px;padding-left:3px;color:#222;white-space:nowrap;overflow:hidden">Accept</div>
 <div class="a" style="left:989px;top:387px;width:30px;height:11px;background:#efefef;border-right:1px solid #bdbdbd;border-bottom:1px solid #c4c4c4;font-size:8px;line-height:10px;padding-left:3px;color:#222;white-space:nowrap;overflow:hidden">Reject</div>
 <div class="a" style="left:769px;top:399.0px;width:43px;height:10.3px;border-right:1px solid #e4e4e4;border-bottom:1px solid #e4e4e4;font-size:7.9px;line-height:10px;padding-left:2px;color:#222;white-space:nowrap;overflow:hidden">Refraction (</div>
 <div class="a" style="left:812px;top:399.0px;width:44px;height:10.3px;border-right:1px solid #e4e4e4;border-bottom:1px solid #e4e4e4;font-size:8.2px;line-height:10px;padding-left:2px;color:#222;white-space:nowrap;overflow:hidden">367.20</div>
 <div class="a" style="left:856px;top:399.0px;width:103px;height:10.3px;border-right:1px solid #e4e4e4;border-bottom:1px solid #e4e4e4;font-size:7.4px;line-height:10px;padding-left:2px;color:#222;white-space:nowrap;overflow:hidden">ASTIGMATISM</div>
 <div class="a" style="left:959px;top:399.0px;width:30px;height:10.3px;border-right:1px solid #e4e4e4;border-bottom:1px solid #e4e4e4;font-size:7.6px;line-height:10px;text-align:right;padding-right:3px;color:#999;color:#222;white-space:nowrap;overflow:hidden">···</div>
 <div class="a" style="left:989px;top:399.0px;width:30px;height:10.3px;border-right:1px solid #e4e4e4;border-bottom:1px solid #e4e4e4;font-size:7.6px;line-height:10px;text-align:right;padding-right:3px;color:#999;color:#222;white-space:nowrap;overflow:hidden">···</div>
 <div class="a" style="left:769px;top:409.3px;width:43px;height:10.3px;border-right:1px solid #e4e4e4;border-bottom:1px solid #e4e4e4;font-size:7.9px;line-height:10px;padding-left:2px;color:#222;white-space:nowrap;overflow:hidden">Refraction (</div>
 <div class="a" style="left:812px;top:409.3px;width:44px;height:10.3px;border-right:1px solid #e4e4e4;border-bottom:1px solid #e4e4e4;font-size:8.2px;line-height:10px;padding-left:2px;color:#222;white-space:nowrap;overflow:hidden">367.4</div>
 <div class="a" style="left:856px;top:409.3px;width:103px;height:10.3px;border-right:1px solid #e4e4e4;border-bottom:1px solid #e4e4e4;font-size:7.4px;line-height:10px;padding-left:2px;color:#222;white-space:nowrap;overflow:hidden">PRESBYOPIA</div>
 <div class="a" style="left:959px;top:409.3px;width:30px;height:10.3px;border-right:1px solid #e4e4e4;border-bottom:1px solid #e4e4e4;font-size:7.6px;line-height:10px;text-align:right;padding-right:3px;color:#999;color:#222;white-space:nowrap;overflow:hidden">···</div>
 <div class="a" style="left:989px;top:409.3px;width:30px;height:10.3px;border-right:1px solid #e4e4e4;border-bottom:1px solid #e4e4e4;font-size:7.6px;line-height:10px;text-align:right;padding-right:3px;color:#999;color:#222;white-space:nowrap;overflow:hidden">···</div>
 <div class="a" style="left:769px;top:419.6px;width:43px;height:10.3px;border-right:1px solid #e4e4e4;border-bottom:1px solid #e4e4e4;font-size:7.9px;line-height:10px;padding-left:2px;color:#222;white-space:nowrap;overflow:hidden">Refraction (</div>
 <div class="a" style="left:812px;top:419.6px;width:44px;height:10.3px;border-right:1px solid #e4e4e4;border-bottom:1px solid #e4e4e4;font-size:8.2px;line-height:10px;padding-left:2px;color:#222;white-space:nowrap;overflow:hidden">367.1</div>
 <div class="a" style="left:856px;top:419.6px;width:103px;height:10.3px;border-right:1px solid #e4e4e4;border-bottom:1px solid #e4e4e4;font-size:7.4px;line-height:10px;padding-left:2px;color:#222;white-space:nowrap;overflow:hidden">MYOPIA</div>
 <div class="a" style="left:959px;top:419.6px;width:30px;height:10.3px;border-right:1px solid #e4e4e4;border-bottom:1px solid #e4e4e4;font-size:7.6px;line-height:10px;text-align:right;padding-right:3px;color:#999;color:#222;white-space:nowrap;overflow:hidden">···</div>
 <div class="a" style="left:989px;top:419.6px;width:30px;height:10.3px;border-right:1px solid #e4e4e4;border-bottom:1px solid #e4e4e4;font-size:7.6px;line-height:10px;text-align:right;padding-right:3px;color:#999;color:#222;white-space:nowrap;overflow:hidden">···</div>
 <div class="a" style="left:769px;top:429.9px;width:43px;height:10.3px;border-right:1px solid #e4e4e4;border-bottom:1px solid #e4e4e4;font-size:7.9px;line-height:10px;padding-left:2px;color:#222;white-space:nowrap;overflow:hidden">Refraction (</div>
 <div class="a" style="left:812px;top:429.9px;width:44px;height:10.3px;border-right:1px solid #e4e4e4;border-bottom:1px solid #e4e4e4;font-size:8.2px;line-height:10px;padding-left:2px;color:#222;white-space:nowrap;overflow:hidden">367.20</div>
 <div class="a" style="left:856px;top:429.9px;width:103px;height:10.3px;border-right:1px solid #e4e4e4;border-bottom:1px solid #e4e4e4;font-size:7.4px;line-height:10px;padding-left:2px;color:#222;white-space:nowrap;overflow:hidden">ASTIGMATISM</div>
 <div class="a" style="left:959px;top:429.9px;width:30px;height:10.3px;border-right:1px solid #e4e4e4;border-bottom:1px solid #e4e4e4;font-size:7.6px;line-height:10px;text-align:right;padding-right:3px;color:#999;color:#222;white-space:nowrap;overflow:hidden">···</div>
 <div class="a" style="left:989px;top:429.9px;width:30px;height:10.3px;border-right:1px solid #e4e4e4;border-bottom:1px solid #e4e4e4;font-size:7.6px;line-height:10px;text-align:right;padding-right:3px;color:#999;color:#222;white-space:nowrap;overflow:hidden">···</div>
 <div class="a" style="left:769px;top:440.2px;width:43px;height:10.3px;border-right:1px solid #e4e4e4;border-bottom:1px solid #e4e4e4;font-size:7.9px;line-height:10px;padding-left:2px;color:#222;white-space:nowrap;overflow:hidden">Refraction (</div>
 <div class="a" style="left:812px;top:440.2px;width:44px;height:10.3px;border-right:1px solid #e4e4e4;border-bottom:1px solid #e4e4e4;font-size:8.2px;line-height:10px;padding-left:2px;color:#222;white-space:nowrap;overflow:hidden">367.4</div>
 <div class="a" style="left:856px;top:440.2px;width:103px;height:10.3px;border-right:1px solid #e4e4e4;border-bottom:1px solid #e4e4e4;font-size:7.4px;line-height:10px;padding-left:2px;color:#222;white-space:nowrap;overflow:hidden">PRESBYOPIA</div>
 <div class="a" style="left:959px;top:440.2px;width:30px;height:10.3px;border-right:1px solid #e4e4e4;border-bottom:1px solid #e4e4e4;font-size:7.6px;line-height:10px;text-align:right;padding-right:3px;color:#999;color:#222;white-space:nowrap;overflow:hidden">···</div>
 <div class="a" style="left:989px;top:440.2px;width:30px;height:10.3px;border-right:1px solid #e4e4e4;border-bottom:1px solid #e4e4e4;font-size:7.6px;line-height:10px;text-align:right;padding-right:3px;color:#999;color:#222;white-space:nowrap;overflow:hidden">···</div>
 <span class="a" style="left:858px;top:548px;font-size:16.5px;line-height:19px;color:#bebebe;white-space:nowrap">Activate Windows</span>
 <span class="a" style="left:858px;top:569px;font-size:12.5px;line-height:15px;color:#c2c2c2;white-space:nowrap">Go to Settings to activate Windows.</span>
 <!--RIGHT-PANEL-->
 <div class="a" style="left:0;top:46px;width:1px;height:598px;background:#9a9a9a"></div>
 <!-- STATUS BAR -->
 <div class="a" style="left:0;top:626px;width:1057px;height:2px;background:#dcdcdc"></div>
 <div class="a" style="left:0;top:628px;width:1057px;height:15px;background:#eeeeee"></div>
 <div class="a" style="left:5px;top:629px;width:36px;height:13px;border:1px solid #dadada;border-right-color:#fbfbfb;border-bottom-color:#fbfbfb"></div>
 <div class="a" style="left:43px;top:629px;width:146px;height:13px;border:1px solid #dadada;border-right-color:#fbfbfb;border-bottom-color:#fbfbfb"></div>
 <div class="a" style="left:191px;top:629px;width:870px;height:13px;border:1px solid #dadada;border-right-color:#fbfbfb;border-bottom-color:#fbfbfb"></div>
 <span class="tx" style="left:49px;top:631px;font-size:9px;color:#111">ADMIN is logged in.</span>
 <div class="a" style="left:0;top:643px;width:1057px;height:2px;background:#3a3a3a"></div>
 <!--STATUS-->
</div>
</body>
</html>
